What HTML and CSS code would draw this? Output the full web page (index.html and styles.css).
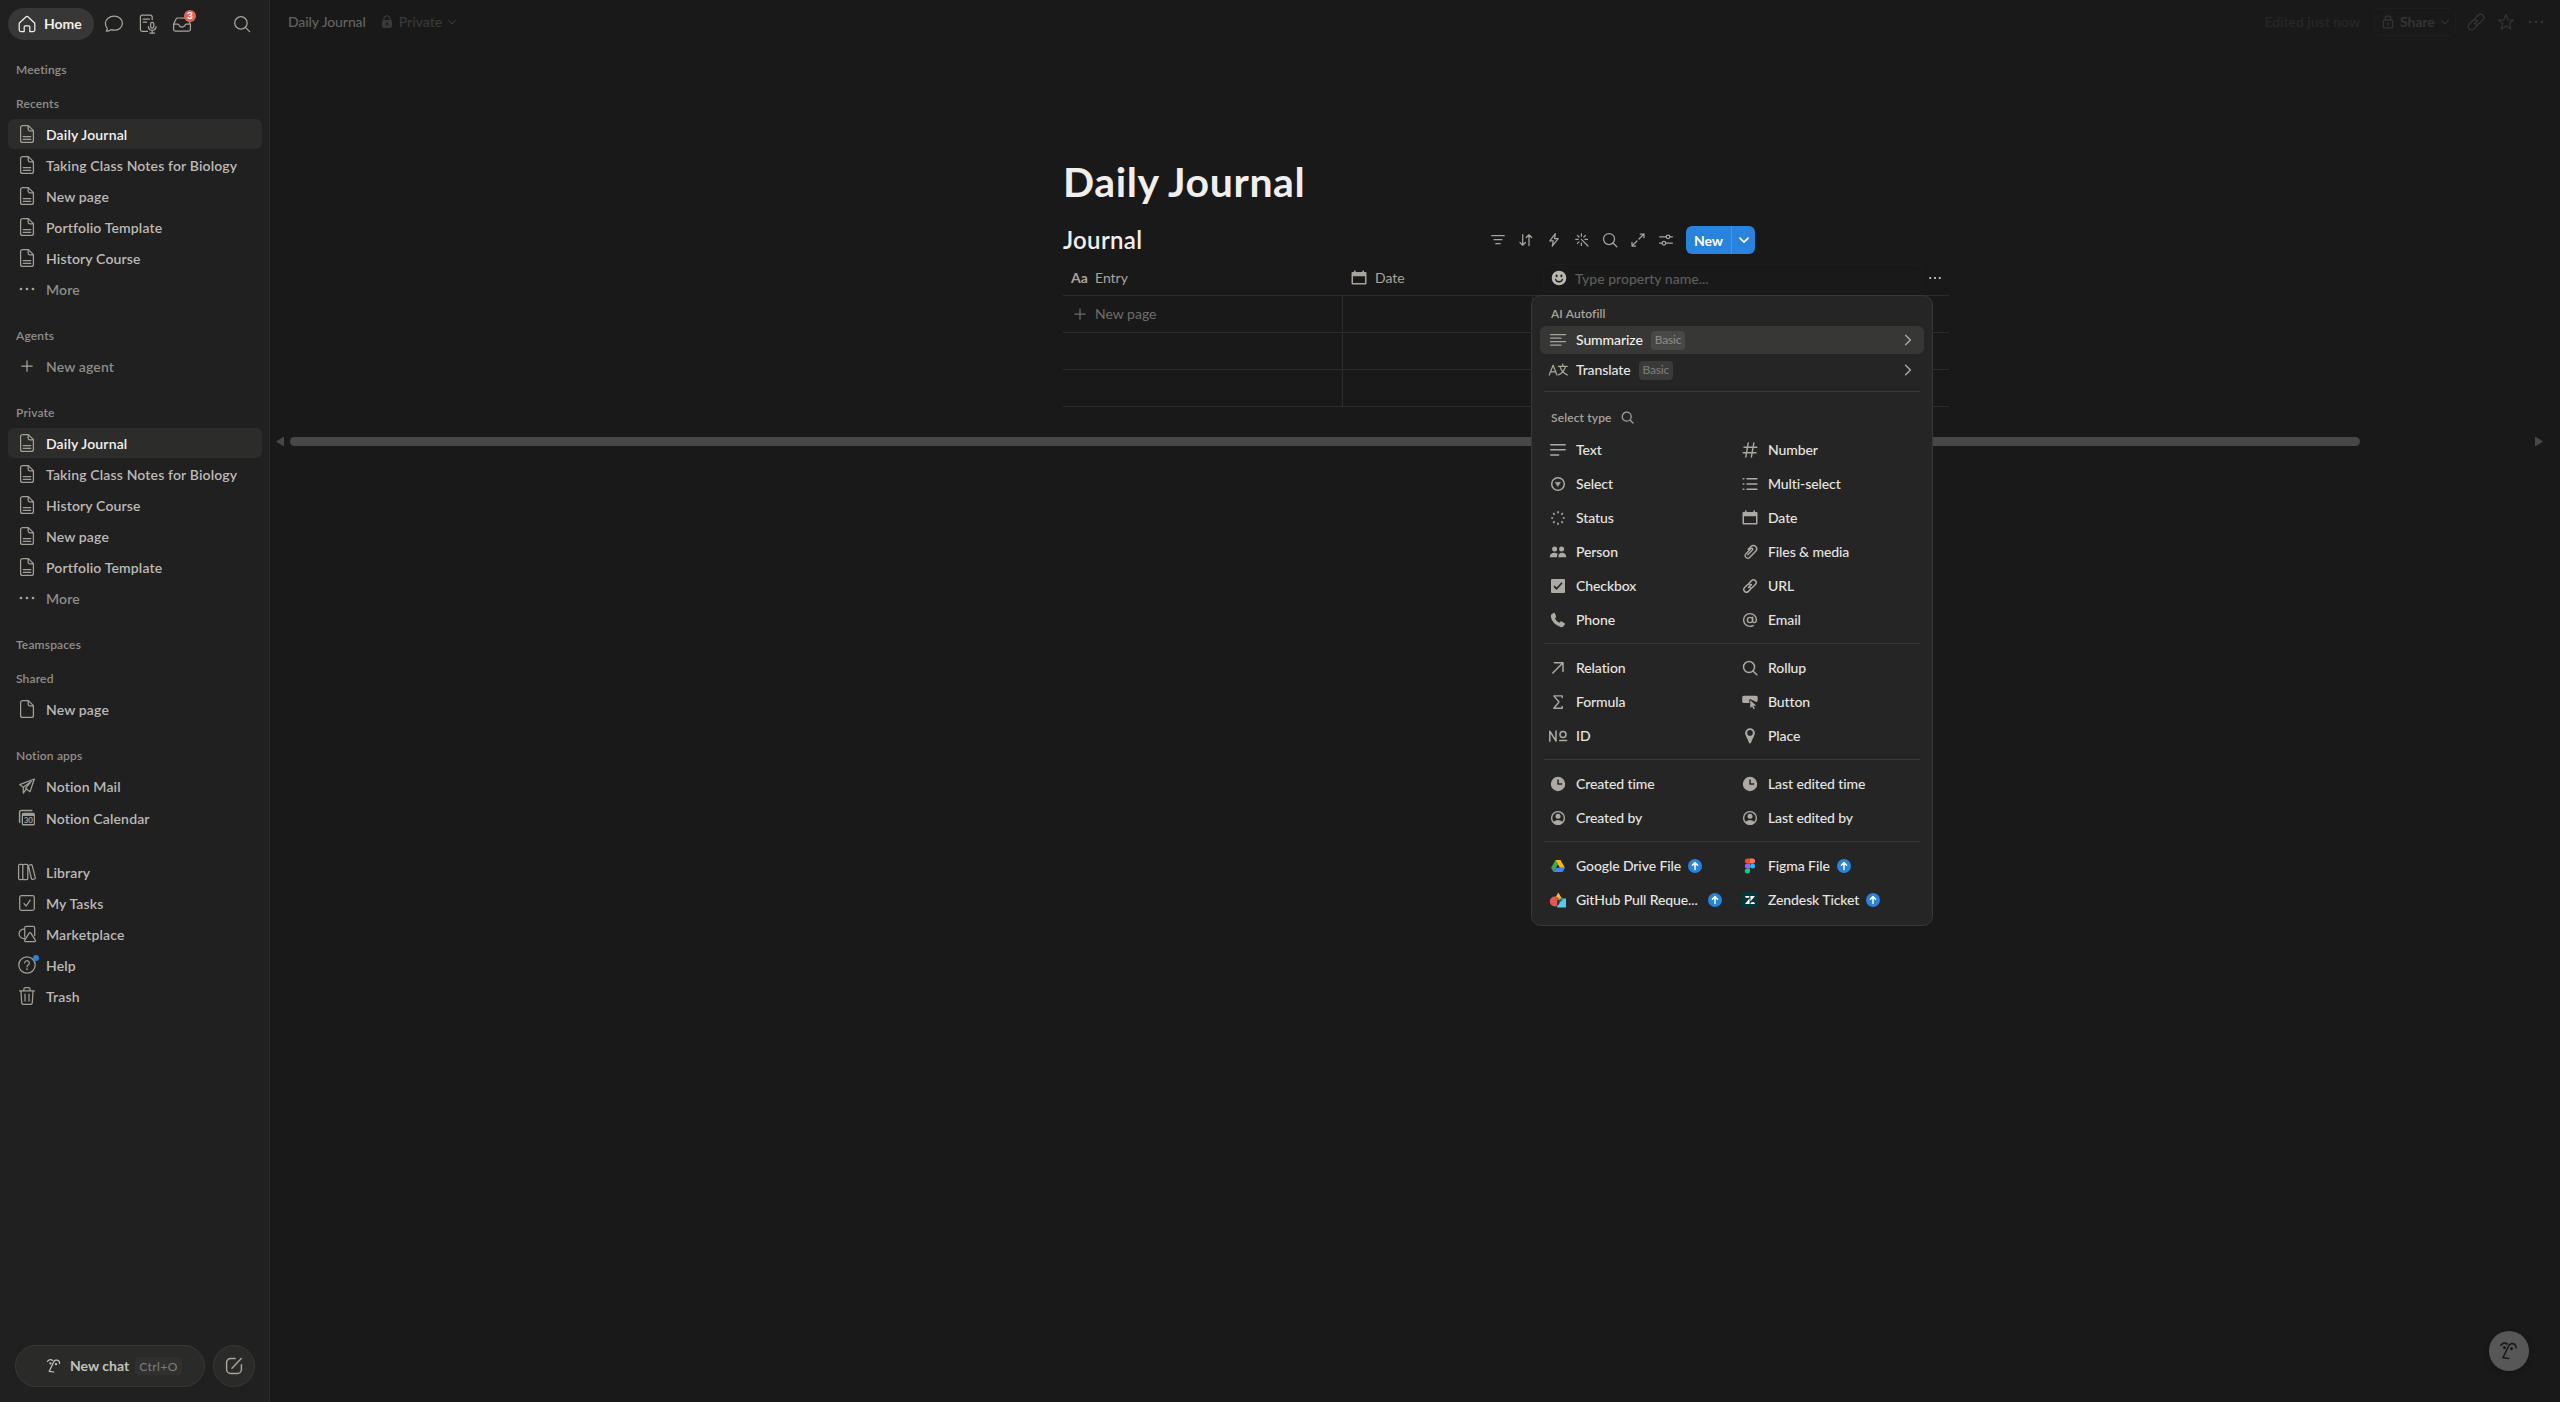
FILE: index.html
```html
<!DOCTYPE html>
<html lang="en">
<head>
<meta charset="utf-8">
<title>Daily Journal</title>
<link rel="stylesheet" href="styles.css">
</head>
<body>
<svg class="defs" aria-hidden="true">
  <symbol id="page" viewBox="0 0 20 20"><path d="M5.6 1.6h5.8l5 5v9.8a2 2 0 0 1-2 2H5.6a2 2 0 0 1-2-2V3.6a2 2 0 0 1 2-2zM11.2 1.9v3.3a1.6 1.6 0 0 0 1.6 1.6h3.4M6.2 12.5h7.6M6.2 15.3h7.6"/></symbol>
  <symbol id="blank" viewBox="0 0 20 20"><path d="M5.6 1.6h5.8l5 5v9.8a2 2 0 0 1-2 2H5.6a2 2 0 0 1-2-2V3.6a2 2 0 0 1 2-2zM11.2 1.9v3.3a1.6 1.6 0 0 0 1.6 1.6h3.4"/></symbol>
  <symbol id="dots" viewBox="0 0 20 20"><g fill="currentColor" stroke="none"><circle cx="4" cy="10" r="1.35"/><circle cx="10" cy="10" r="1.35"/><circle cx="16" cy="10" r="1.35"/></g></symbol>
  <symbol id="plus" viewBox="0 0 20 20"><path d="M10 4.8v10.4M4.8 10h10.4"/></symbol>
  <symbol id="search" viewBox="0 0 20 20"><circle cx="8.8" cy="8.8" r="6.9"/><path d="M13.8 13.8l4.7 4.7"/></symbol>
  <symbol id="chev" viewBox="0 0 16 16"><path d="M4 6.2l4 4 4-4"/></symbol>
  <symbol id="chevr" viewBox="0 0 16 16"><path d="M5.6 3.2L10.4 8l-4.8 4.8"/></symbol>
  <symbol id="link" viewBox="0 0 20 20"><path d="M8.3 11.7l3.4-3.400M8.800 6.500l3.200-3.200a3.300 3.300 0 0 1 4.700 4.700l-3.500 3.500a3 3 0 0 1-3 .8M11.200 13.500L8 16.700A3.300 3.300 0 0 1 3.300 12l3.500-3.500a3 3 0 0 1 3-.8"/></symbol>
  <symbol id="cal" viewBox="0 0 16 16"><path fill="currentColor" stroke="none" fill-rule="evenodd" d="M3 .6h1.6v1.5h6.8V.6H13v1.5h1.6q.9 0 .9.9v10.6q0 .9-.9.9H1.4q-.9 0-.9-.9V3q0-.9.9-.9H3zM2 6.2v6.8h12V6.2z"/></symbol>
  <symbol id="clock" viewBox="0 0 16 16"><path fill="currentColor" stroke="none" fill-rule="evenodd" d="M8 .8a7.2 7.2 0 1 0 0 14.4A7.2 7.2 0 0 0 8 .8zM7.3 3.6h1.5v3.7h3.4v1.5H7.3z"/></symbol>
  <symbol id="user" viewBox="0 0 16 16"><circle cx="8" cy="8" r="6.4" stroke-width="1.4"/><g fill="currentColor" stroke="none"><circle cx="8" cy="6.2" r="2.5"/><path d="M3 12.4Q4.6 9.9 8 9.9t5 2.5Q11 15 8 15t-5-2.6z"/></g></symbol>
  <symbol id="face" viewBox="0 0 16 16"><path d="M1.5 3.4Q3.6.6 6.6 2.4M13.6 5.6Q13.6 1.6 9.6 2.2 8.4 2.5 7.4 4.6L3.2 13.4l4.6.6"/><g fill="currentColor" stroke="none"><circle cx="4.4" cy="5.4" r="1.15"/><circle cx="10" cy="6.2" r="1.15"/></g></symbol>
  <symbol id="up" viewBox="0 0 14 14"><circle cx="7" cy="7" r="7" fill="#2783de" stroke="none"/><path d="M7 10.6V3.8M4.4 6.2L7 3.6l2.6 2.6" stroke="#fff" stroke-width="1.5"/></symbol>
</svg>

<div class="app">
  <aside class="sidebar">
    <div class="tabs">
      <div class="home"><svg class="i20"><path d="M2.2 9.2L8.8 3a1.8 1.8 0 0 1 2.4 0l6.6 6.2M2.2 9v6.8a1.8 1.8 0 0 0 1.8 1.8h3.2v-4.6a1.2 1.2 0 0 1 1.2-1.2h3.2a1.2 1.2 0 0 1 1.2 1.2v4.6H16a1.8 1.8 0 0 0 1.8-1.8V9"/></svg>Home</div>
      <svg class="i20"><path d="M10.2 2.2c4.7 0 8.2 3.1 8.2 7s-3.500 7-8.200 7c-1.100 0-2.200-.2-3.100-.5-1.200.9-2.700 1.500-4.900 1.500.9-.9 1.200-1.700 1-2.900C2.100 13 1.400 11.200 1.400 9.200c0-3.900 4.100-7 8.800-7z"/></svg>
      <svg class="i20"><path d="M9.500 17.400H4.200a1.800 1.800 0 0 1-1.800-1.800V3A1.800 1.800 0 0 1 4.200 1.200h8.200A1.800 1.800 0 0 1 14.200 3v2.600M5.200 5.200h6.200M5.200 8.200h3.400M12.600 10a1.600 1.600 0 0 1 3.200 0v2.600a1.600 1.600 0 0 1-3.200 0zM10.400 12.600c0 2.400 1.600 3.700 3.800 3.700s3.800-1.300 3.800-3.700M14.200 16.300v2.600M11.800 19h4.800"/></svg>
      <div class="inbox"><svg class="i20"><path d="M1.600 10.200L4.100 5a1.800 1.800 0 0 1 1.600-1h8.600a1.800 1.800 0 0 1 1.600 1l2.500 5.200v5a1.800 1.800 0 0 1-1.800 1.800H3.400a1.800 1.800 0 0 1-1.800-1.800zM1.600 10h4.200c.8 0 1 .5 1.300 1.200.5 1.200 1.500 1.800 2.900 1.800s2.400-.6 2.900-1.800c.3-.7.5-1.200 1.300-1.200h4.200"/></svg><b class="badge">3</b></div>
      <svg class="i20 find"><use href="#search"/></svg>
    </div>

    <section><h4>Meetings</h4></section>
    <section class="near"><h4>Recents</h4>
      <a class="row on"><svg class="i20"><use href="#page"/></svg>Daily Journal</a>
      <a class="row"><svg class="i20"><use href="#page"/></svg>Taking Class Notes for Biology</a>
      <a class="row"><svg class="i20"><use href="#page"/></svg>New page</a>
      <a class="row"><svg class="i20"><use href="#page"/></svg>Portfolio Template</a>
      <a class="row"><svg class="i20"><use href="#page"/></svg>History Course</a>
      <a class="row dim"><svg class="i20"><use href="#dots"/></svg>More</a>
    </section>
    <section><h4>Agents</h4>
      <a class="row dim"><svg class="i20"><use href="#plus"/></svg>New agent</a>
    </section>
    <section><h4>Private</h4>
      <a class="row on"><svg class="i20"><use href="#page"/></svg>Daily Journal</a>
      <a class="row"><svg class="i20"><use href="#page"/></svg>Taking Class Notes for Biology</a>
      <a class="row"><svg class="i20"><use href="#page"/></svg>History Course</a>
      <a class="row"><svg class="i20"><use href="#page"/></svg>New page</a>
      <a class="row"><svg class="i20"><use href="#page"/></svg>Portfolio Template</a>
      <a class="row dim"><svg class="i20"><use href="#dots"/></svg>More</a>
    </section>
    <section><h4>Teamspaces</h4></section>
    <section class="near"><h4>Shared</h4>
      <a class="row"><svg class="i20"><use href="#blank"/></svg>New page</a>
    </section>
    <section class="apps"><h4>Notion apps</h4>
      <a class="row"><svg class="i20"><path d="M17.300 3L2.700 8.600l3.600 2.600 7.900-5.600-5.700 6.700 4.500 3.400L17.300 3zM6.300 11.200v5.800l2.600-3.400"/></svg>Notion Mail</a>
      <a class="row"><svg class="i20"><path d="M2.600 14.200V4.200a1.800 1.800 0 0 1 1.800-1.700h10.400" stroke-width="1.500"/><path fill="currentColor" stroke="none" fill-rule="evenodd" d="M6.400 4.800h9.800a1.700 1.700 0 0 1 1.700 1.700v9.400a1.700 1.700 0 0 1-1.700 1.700H6.400a1.700 1.700 0 0 1-1.700-1.700V6.500a1.700 1.700 0 0 1 1.700-1.700zM6 8v8h10.700V8z"/><text class="num" x="6.700" y="14.900">30</text></svg>Notion Calendar</a>
    </section>
    <section class="tools">
      <a class="row"><svg class="i20"><path d="M1.600 3.600a1.200 1.200 0 0 1 1.200-1.200h1.800a1.200 1.200 0 0 1 1.200 1.200v12.800a1.200 1.200 0 0 1-1.200 1.200H2.800a1.200 1.200 0 0 1-1.200-1.200zM5.800 3.600A1.200 1.200 0 0 1 7 2.400h2.600a1.200 1.200 0 0 1 1.200 1.200v12.800a1.200 1.200 0 0 1-1.200 1.200H7a1.200 1.200 0 0 1-1.200-1.200zM11.600 4.400a1.200 1.200 0 0 1 .9-1.400l1.300-.3a1.200 1.200 0 0 1 1.400.9l3.100 12a1.200 1.200 0 0 1-.9 1.400l-1.600.4a1.200 1.200 0 0 1-1.400-.9z"/></svg>Library</a>
      <a class="row"><svg class="i20"><rect x="2.700" y="2.700" width="14.600" height="14.600" rx="1.800"/><path d="M7 10.600l2.200 2.400 4-5.800"/></svg>My Tasks</a>
      <a class="row"><svg class="i20"><path d="M7.900 12.800a1.700 1.700 0 0 1-.2-.8V4a1.600 1.600 0 0 1 1.600-1.600h6.800A1.600 1.600 0 0 1 17.700 4v7.600M7.600 5.200a4.700 4.700 0 1 0 .2 9.200M12.200 9.100a1 1 0 0 1 1.700 0l4.400 7a1 1 0 0 1-.9 1.600H8.700a1 1 0 0 1-.9-1.600z"/></svg>Marketplace</a>
      <a class="row help"><svg class="i20"><circle cx="10" cy="10" r="8.200"/><path d="M7.700 8a2.300 2.300 0 1 1 3.500 2c-.8.500-1.200.9-1.200 1.900"/><circle cx="10" cy="14.100" r=".9" fill="currentColor" stroke="none"/></svg><i class="ping"></i>Help</a>
      <a class="row"><svg class="i20"><path d="M2.600 4.900h14.800M6.900 4.700V3.300a1.600 1.600 0 0 1 1.600-1.600h3a1.600 1.600 0 0 1 1.600 1.600v1.400M4 5l.7 11.600a1.800 1.800 0 0 0 1.800 1.700h7a1.800 1.800 0 0 0 1.800-1.700L16 5M8 8.200v6.900M12 8.200v6.900"/></svg>Trash</a>
    </section>

    <div class="chatbar">
      <div class="chat"><svg class="i16"><use href="#face"/></svg><span>New chat</span><kbd>Ctrl+O</kbd></div>
      <div class="compose"><svg class="i20"><path d="M11.200 2.600H6.600a4 4 0 0 0-4 4v6.800a4 4 0 0 0 4 4h6.800a4 4 0 0 0 4-4V8.800M8 12.200l9.200-9.600"/></svg></div>
    </div>
  </aside>

  <main>
    <header class="top">
      <span class="crumb">Daily Journal</span>
      <span class="priv"><svg class="i16"><path fill="currentColor" stroke="none" fill-rule="evenodd" d="M4.300 6V4.900a3.700 3.700 0 0 1 7.400 0V6q1.300 0 1.300 1.400v4.800q0 1.800-1.800 1.800H4.800Q3 14 3 12.200V7.400Q3 6 4.300 6zM5.500 6h5V4.900a2.500 2.500 0 0 0-5 0zM8 8.400a1.200 1.200 0 0 0-.5 2.200v1.200h1v-1.200A1.200 1.200 0 0 0 8 8.400z"/></svg>Private<svg class="i14"><use href="#chev"/></svg></span>
      <span class="edited">Edited just now</span>
      <span class="share"><svg class="i16"><rect x="3.300" y="6.200" width="9.400" height="7.600" rx="1.400"/><path d="M5.200 6V4.600a2.800 2.800 0 0 1 5.600 0V6M8 8.900v2.300"/></svg><span>Share</span><svg class="i14"><use href="#chev"/></svg></span>
      <span class="acts"><svg class="i20"><use href="#link"/></svg><svg class="i20"><path d="M10 2.600l2.100 5.200 5.500.3-4.300 3.500 1.400 5.400-4.700-3-4.700 3 1.400-5.400L2.400 8.100l5.500-.3z"/></svg><svg class="i20"><use href="#dots"/></svg></span>
    </header>

    <div class="doc">
      <h1>Daily Journal</h1>
      <div class="viewbar">
        <h2>Journal</h2>
        <div class="icons">
          <svg class="i16"><path d="M1.800 3.700h12.400M4 7.700h8M5.800 11.700h4.400"/></svg>
          <svg class="i16"><path d="M4.700 2.500v10.600M2 10.500l2.700 2.700 2.700-2.700M11 13.500V2.900M8.300 5.500L11 2.800l2.700 2.700"/></svg>
          <svg class="i16"><path d="M9.300 1.700L3.800 8.900h3.500l-1 5.200 5.900-7.400H8.600z"/></svg>
          <svg class="i16"><path d="M7.400 7.400l6.600 6.600M7.400 1.800v2.400M7.400 11v2.400M1.800 7.400h2.400M11 7.400h2.400M3.400 3.400L5 5M11.400 3.400L9.900 5M3.400 11.400L5 9.900"/></svg>
          <svg class="i16 firm"><use href="#search"/></svg>
          <svg class="i16"><path d="M9 7l5-5M10.300 2H14v3.700M7 9l-5 5M2 10.300V14h3.700"/></svg>
          <svg class="i16"><path d="M1.600 4.800h6.600M12 4.800h2.400M1.600 11.200H4M7.800 11.200h6.600"/><circle cx="10.100" cy="4.800" r="1.800"/><circle cx="5.900" cy="11.200" r="1.800"/></svg>
        </div>
        <div class="new"><span>New</span><span class="drop"><svg class="i16"><use href="#chev"/></svg></span></div>
      </div>

      <div class="table">
        <div class="head">
          <span class="c1"><b class="aa">Aa</b>Entry</span>
          <span class="c2"><svg class="i16"><use href="#cal"/></svg>Date</span>
          <span class="c3"><span class="field"><svg class="i16"><path fill="currentColor" stroke="none" fill-rule="evenodd" d="M8 .7a7.300 7.300 0 1 0 0 14.600A7.300 7.300 0 0 0 8 .7zM5.600 4.600a1 1.300 0 1 1 0 2.600 1 1.300 0 0 1 0-2.600zM10.400 4.600a1 1.300 0 1 1 0 2.600 1 1.300 0 0 1 0-2.600zM3.800 8.800h1.100Q5.600 11 8 11t3.100-2.200h1.100Q11.600 12.400 8 12.400T3.800 8.800z"/></svg>Type property name...</span><svg class="i16 more"><use href="#dots"/></svg></span>
        </div>
        <div class="line"><span class="c1"><svg class="i20"><use href="#plus"/></svg>New page</span><span class="c2"></span></div>
        <div class="line"><span class="c1"></span><span class="c2"></span></div>
        <div class="line"><span class="c1"></span><span class="c2"></span></div>

        <div class="menu">
          <h5>AI Autofill</h5>
          <div class="ai sel"><svg class="i16"><path d="M.5 2.700h15M.5 6.200h10.500M.5 9.700h15M.5 13.200h10.500"/></svg>Summarize<em>Basic</em><svg class="i16 go"><use href="#chevr"/></svg></div>
          <div class="ai"><svg class="i20 tr"><path d="M1.200 15L5.100 5.200 9 15M2.600 11.800h5M10.300 6.400h8.900M14.700 4.200v2.200M17.400 6.600q-1.500 5.800-6.800 8.300M12 6.600q1.800 5.800 7.300 8.300"/></svg>Translate<em>Basic</em><svg class="i16 go"><use href="#chevr"/></svg></div>
          <hr>
          <h5 class="pick">Select type<svg class="i12"><use href="#search"/></svg></h5>
          <div class="types">
            <div><svg class="i16"><path d="M.8 2.700h14.400M.8 7.800h14.400M.8 12.900h7.800" stroke-width="1.500"/></svg>Text</div>
            <div><svg class="i16"><path d="M6.200 1L3.800 15M11.800 1L9.400 15M2 5.300h12.800M1.200 10.700H14" stroke-width="1.400"/></svg>Number</div>
            <div><svg class="i16"><circle cx="8" cy="8" r="6.300" stroke-width="1.500"/><path fill="currentColor" d="M5.700 6.400h4.600L8 10z" stroke-width=".8"/></svg>Select</div>
            <div><svg class="i16"><path d="M5 2.800h9.900M5 8h9.900M5 13.200h9.900M1.200 2.800h.7M1.200 8h.7M1.200 13.200h.7" stroke-width="1.500"/></svg>Multi-select</div>
            <div><svg class="i16"><path d="M8 1.200v2M8 12.800v2M1.200 8h2M12.800 8h2M3.200 3.200l1.400 1.400M11.400 11.400l1.400 1.400M3.200 12.800l1.400-1.400M11.400 4.600l1.400-1.400" stroke-width="1.700" stroke-linecap="butt"/></svg>Status</div>
            <div><svg class="i16"><use href="#cal"/></svg>Date</div>
            <div><svg class="i16"><g fill="currentColor" stroke="none"><circle cx="4.600" cy="5" r="2.500"/><circle cx="11.600" cy="5" r="2.500"/><path d="M-.2 13.300q0-4.600 4.600-4.600 2.400 0 3.300 1.200-.9 1.200-.8 3.400zM8.300 13.300q0-4.600 3.500-4.600 4.400 0 4.400 4.600z"/></g></svg>Person</div>
            <div><svg class="i16"><path d="M5.800 10.800l4.600-4.700a1 1 0 0 0-1.500-1.500L4 9.700a2.600 2.600 0 0 0-.2 3.700 2.600 2.600 0 0 0 3.800 0l6.100-6.200a3.300 3.300 0 0 0-4.700-4.700L6.200 5.300" stroke-width="1.400"/></svg>Files &amp; media</div>
            <div><svg class="i16"><path fill="currentColor" stroke="none" fill-rule="evenodd" d="M2 1h12q1 0 1 1v12q0 1-1 1H2q-1 0-1-1V2q0-1 1-1zM4.600 7.500l-1.200 1.200 3.200 3.200 6-6.600-1.200-1.100-4.800 5.300z"/></svg>Checkbox</div>
            <div><svg class="i16 bold"><use href="#link"/></svg>URL</div>
            <div><svg class="i16"><path fill="currentColor" stroke="none" d="M3.800.9L1.700 2.100Q.6 3 .9 5q.7 3.800 3.300 6.300t6.300 3.800q2 .3 3-.9l1.500-1.900q.3-.6-.3-1.100l-3-1.800q-.6-.3-1.100.1l-1.500 1.200Q6.500 9.300 5 6.700l1-1.600q.3-.6 0-1.100L4.900 1.300Q4.500.6 3.800.9z"/></svg>Phone</div>
            <div><svg class="i16"><circle cx="8" cy="8" r="2.600" stroke-width="1.400"/><path d="M10.600 5.200v3.600q0 1.800 1.600 1.800 2.200 0 2.200-2.900A6.400 6.400 0 1 0 8 14.400q1.700 0 3.200-.8" stroke-width="1.400"/></svg>Email</div>
          </div>
          <hr>
          <div class="types">
            <div><svg class="i16"><path d="M2.800 13L13 2.800M4.400 2.800H13v8.600" stroke-width="1.500"/></svg>Relation</div>
            <div><svg class="i16 bold"><use href="#search"/></svg>Rollup</div>
            <div><svg class="i16"><path d="M12.200 3.600V1.900H3.800L9 8l-5.200 6.200h8.400v-1.700" stroke-width="1.400"/></svg>Formula</div>
            <div><svg class="i16"><path fill="currentColor" stroke="none" d="M1.800 1.800h12.400q1.500 0 1.500 1.500v3q0 1.700-1.500 1.700L8.600 5.200Q7.200 4.900 7.200 6.300L7.400 9H1.800Q.2 9 .2 7.400V3.300q0-1.500 1.600-1.500z"/><path fill="currentColor" stroke="none" d="M8.200 6.200l6 5.400-2.700.2 1.400 2.800-1.300.7-1.400-2.900-1.900 1.700z"/></svg>Button</div>
            <div><svg class="i20 tr"><path d="M1.800 15.300V5.200l6.200 9.800V4.900" stroke-width="1.500"/><circle cx="15" cy="8.400" r="3" stroke-width="1.500"/><path d="M11.600 14.500h7" stroke-width="1.500"/></svg>ID</div>
            <div><svg class="i16"><path fill="currentColor" stroke="none" fill-rule="evenodd" d="M8 .2a4.900 4.900 0 0 1 4.900 4.900c0 2.600-2.500 5.600-3.800 9.300q-.3 1-1.100 1t-1.100-1C5.600 10.700 3.100 7.700 3.100 5.100A4.900 4.900 0 0 1 8 .2zM8 2.100a2.800 2.800 0 1 0 0 5.600 2.800 2.800 0 0 0 0-5.600z"/></svg>Place</div>
          </div>
          <hr>
          <div class="types">
            <div><svg class="i16"><use href="#clock"/></svg>Created time</div>
            <div><svg class="i16"><use href="#clock"/></svg>Last edited time</div>
            <div><svg class="i16"><use href="#user"/></svg>Created by</div>
            <div><svg class="i16"><use href="#user"/></svg>Last edited by</div>
          </div>
          <hr>
          <div class="types">
            <div><svg class="i16 logo"><path fill="#34a853" d="M5.500 2L8 6.400 3.600 14 1.100 9.700z"/><path fill="#fbbc04" d="M5.500 2h5l4.400 7.700H9.900z"/><path fill="#4285f4" d="M6.100 9.700h8.800L12.400 14H3.600z"/></svg>Google Drive File<svg class="up"><use href="#up"/></svg></div>
            <div><svg class="i16 logo"><path fill="#f24e1e" d="M8 .4v5H5.400a2.500 2.500 0 0 1 0-5z"/><path fill="#ff7262" d="M8 .4h2.600a2.500 2.500 0 0 1 0 5H8z"/><path fill="#a259ff" d="M8 5.400v5H5.400a2.500 2.500 0 0 1 0-5z"/><circle cx="10.600" cy="7.900" r="2.500" fill="#1abcfe"/><path fill="#0acf83" d="M8 10.400v2.500a2.600 2.500 0 1 1-2.600-2.500z"/></svg>Figma File<svg class="up"><use href="#up"/></svg></div>
            <div><svg class="i16 logo"><path fill="#f9bc3c" d="M8.300.4L12.800 8H4z"/><path fill="#55c8f2" d="M7.200 6.500H16V15.500H7.200z"/><circle cx="4.800" cy="9.500" r="5" fill="#ea5455"/><path fill="#e8541e" d="M5.900 4.600Q9 5.500 9.600 8H4z"/><path fill="#12893f" d="M9.600 6.500h2.300l.9 1.500Q11.500 9.800 9.700 10.200z"/><path fill="#3b2d3c" d="M7.200 8h2.400q.9 3.800-2.400 5.900z"/></svg>GitHub Pull Reque...<svg class="up far"><use href="#up"/></svg></div>
            <div><svg class="i16 logo"><path fill="#03363d" d="M0 0h16v16H0z"/><path fill="#fff" d="M3 3.900h4.600q0 2-2.300 2T3 3.900zM8.400 3.900H13L8.400 9.500zM7.600 6.300v5.800H3zM8.400 12.100q0-2 2.300-2t2.300 2z"/></svg>Zendesk Ticket<svg class="up"><use href="#up"/></svg></div>
          </div>
        </div>
      </div>
    </div>

    <div class="hscroll"><i class="left"></i><div class="thumb"></div><i class="right"></i></div>
    <div class="ai-button"><svg class="i20"><use href="#face"/></svg></div>
  </main>
</div>
</body>
</html>
```
FILE: styles.css
```css
* { box-sizing: border-box; }
html, body { height: 100%; }
body {
  margin: 0;
  overflow: hidden;
  background: #191919;
  color: #bcbab6;
  font: 600 14px/20px Lato, "Liberation Sans", sans-serif;
  letter-spacing: .15px;
}
h1, h2, h4, h5 { margin: 0; }
.defs { position: absolute; width: 0; height: 0; }
svg {
  flex: none;
  fill: none;
  stroke: currentColor;
  stroke-width: 1.25;
  stroke-linecap: round;
  stroke-linejoin: round;
  overflow: visible;
}
.i20 { width: 20px; height: 20px; }
.i16 { width: 16px; height: 16px; }
.i14 { width: 14px; height: 14px; }
.i12 { width: 13px; height: 13px; stroke-width: 1.9; }
.firm { stroke-width: 1.6; }
.app { display: flex; height: 100%; }

/* Sidebar */
.sidebar {
  display: flex;
  flex-direction: column;
  width: 270px;
  flex: none;
  padding: 8px 7px 0 8px;
  background: #202020;
  border-right: 1px solid #2b2b2b;
}
.tabs {
  display: flex;
  align-items: center;
  height: 32px;
  margin-bottom: -1px;
  color: #a8a49c;
}
.home {
  display: flex;
  align-items: center;
  gap: 7px;
  width: 86px;
  height: 32px;
  padding-left: 9px;
  margin-right: 10px;
  border-radius: 16px;
  background: #373735;
  color: #f0efed;
  font-weight: 700;
  letter-spacing: 0;
}
.tabs > svg { margin-right: 14px; }
.tabs > .find { margin: 0 11px 0 auto; width: 18px; height: 18px; stroke-width: 1.4; }
.inbox { position: relative; height: 20px; }
.badge {
  position: absolute;
  left: 12px;
  top: -4px;
  width: 12px;
  height: 12px;
  border-radius: 50%;
  background: #e56458;
  color: #fff;
  font: 700 9px/12px Inter, sans-serif;
  text-align: center;
  letter-spacing: 0;
}
section { margin-top: 16px; }
section.near { margin-top: 4px; }
h4 {
  height: 30px;
  padding: 0 8px;
  color: #918f8b;
  font-size: 12px;
  line-height: 29px;
  font-weight: 600;
  letter-spacing: .17px;
}
.row {
  position: relative;
  display: flex;
  align-items: center;
  gap: 9px;
  height: 30px;
  margin-bottom: 1px;
  padding: 2px 0 0 9px;
  border-radius: 6px;
}
.row svg { color: #a29f98; margin-top: -2px; }
.row.on { background: #2c2c2b; color: #f4f3f1; }
.row.dim { color: #8f8d89; }
.row.dim svg { color: #a8a49c; }
.apps .row { margin-bottom: 2px; }
.tools { margin-top: 22px; }
.num { font: 700 8px Lato, sans-serif; fill: currentColor; stroke: none; letter-spacing: 0; }
.ping {
  position: absolute;
  left: 25px;
  top: 5px;
  width: 6px;
  height: 6px;
  border-radius: 50%;
  background: #2783de;
}
.chatbar { display: flex; gap: 8px; margin: auto 0 15px 7px; }
.chat, .compose {
  display: flex;
  align-items: center;
  height: 42px;
  border: 1px solid #383836;
  border-radius: 21px;
  background: #2a2a28;
  color: #c4c1bc;
}
.chat { width: 190px; padding-left: 30px; font-weight: 700; letter-spacing: 0; }
.chat svg { margin-right: 8px; }
kbd {
  height: 18px;
  margin-left: 6px;
  padding: 1px 4px 0;
  border-radius: 4px;
  background: #30302e;
  color: #7d7a75;
  font: 500 12px/18px Lato, sans-serif;
  letter-spacing: .45px;
}
.compose { width: 42px; justify-content: center; }
.compose svg { stroke-width: 1.5; color: #a8a49c; }

/* Page header */
main { flex: 1; min-width: 0; display: flex; flex-direction: column; }
.top {
  display: flex;
  align-items: center;
  height: 44px;
  padding: 0 14px 0 18px;
  font-weight: 500;
  letter-spacing: -.1px;
}
.crumb { color: #636261; margin-right: 13px; }
.priv { display: flex; align-items: center; color: #393938; letter-spacing: 0; }
.priv svg:first-child { margin-right: 4px; }
.priv svg:last-child { margin-left: 3px; }
.edited { margin-left: auto; margin-right: 14px; color: #282828; letter-spacing: 0; }
.share {
  display: flex;
  align-items: center;
  width: 82px;
  height: 28px;
  padding-left: 5px;
  border: 1px solid #1e1e1e;
  border-radius: 6px;
  color: #343434;
  font-weight: 700;
}
.share span { margin: 0 3px 0 4px; width: 35px; }
.acts { display: flex; gap: 10px; margin-left: 10px; color: #343434; }

/* Document */
.doc { width: 886px; margin: 112px 0 0 793px; }
h1 {
  height: 60px;
  color: #f0efed;
  font-size: 41px;
  line-height: 51px;
  font-weight: 700;
  letter-spacing: .6px;
}
.viewbar { display: flex; align-items: center; height: 48px; }
h2 { color: #f0efed; font-size: 24px; line-height: 30px; font-weight: 600; letter-spacing: .3px; width: 427px; }
.icons { display: flex; gap: 12px; color: #a8a49c; }
.new {
  display: flex;
  align-items: center;
  height: 28px;
  width: 69px;
  margin-left: 12px;
  border-radius: 6px;
  background: #2783de;
  color: #fff;
  font-weight: 700;
  letter-spacing: 0;
}
.new > span:first-child { width: 45px; padding-top: 2px; text-align: center; }
.drop { display: flex; align-items: center; justify-content: center; flex: 1; height: 28px; border-left: 1px solid #4795e3; }
.drop svg { stroke-width: 1.7; }

.table { position: relative; font-weight: 400; letter-spacing: 0; }
.head, .line { display: flex; border-bottom: 1px solid #2c2c2b; }
.head { height: 32px; padding-bottom: 3px; color: #a8a49c; }
.head > span { display: flex; align-items: center; }
.c1 { width: 280px; padding-left: 8px; }
.c2 { width: 190px; padding-left: 8px; }
.head svg { margin-right: 8px; }
.aa { width: 18px; margin-right: 6px; font-size: 14px; font-weight: 700; }
.c3 { flex: 1; }
.field {
  display: flex;
  align-items: center;
  width: 379px;
  height: 28px;
  margin-left: 10px;
  padding: 2px 0 0 7px;
  border: 1px solid #1d1d1d;
  border-radius: 6px;
  color: #5e5d5b;
  font-weight: 500;
}
.field svg { margin-top: -2px; color: #bab6af; }
.head .more { margin: 0 0 0 5px; color: #d4d2ce; }
.line { height: 37px; color: #6f6d6a; }
.line > span { display: flex; align-items: center; border-right: 1px solid #2c2c2b; }
.line .c1 { padding-left: 7px; }
.line svg { margin-right: 5px; }

/* Property menu */
.menu {
  position: absolute;
  left: 468px;
  top: 31px;
  width: 402px;
  height: 631px;
  padding: 5px 8px;
  border: 1px solid #383836;
  border-radius: 10px;
  background: #252525;
  color: #e6e5e3;
  font-weight: 500;
  letter-spacing: -.1px;
}
h5 {
  height: 25px;
  padding: 1px 11px 0;
  color: #a8a49c;
  font-size: 12px;
  line-height: 24px;
  font-weight: 600;
  letter-spacing: .13px;
}
.ai { display: flex; align-items: center; height: 28px; padding-left: 10px; border-radius: 6px; margin-bottom: 2px; }
.ai svg { color: #a8a49c; margin-right: 10px; }
.ai .tr, .types .tr { margin-left: -2px; margin-right: 8px; }
.ai.sel { background: #373735; color: #f0efed; }
.ai em {
  height: 19px;
  margin-left: 8px;
  padding: 0 4px;
  border-radius: 4px;
  background: #3a3a38;
  color: #7d7a75;
  font: 500 12px/18px Lato, sans-serif;
  letter-spacing: -.2px;
}
.ai.sel em { background: #484846; color: #8b8883; }
.ai .go { margin: 0 8px 0 auto; stroke-width: 1.5; }
hr { height: 1px; margin: 6px 4px 7px; border: 0; background: #383836; }
.ai + hr { margin: 7px 4px 13px; }
.pick { display: flex; align-items: center; gap: 9px; height: 26px; padding-top: 0; padding-bottom: 1px; margin-bottom: 2px; }
.types { display: grid; grid-template-columns: 192px 192px; grid-auto-rows: 34px; }
.types > div { display: flex; align-items: center; padding-left: 10px; }
.types svg { color: #ada9a3; margin-right: 10px; }
.types .up { width: 14px; height: 14px; margin: 0 0 0 7px; }
.types .far { margin-left: 10px; }
.types .logo { stroke: none; }
.bold { stroke-width: 1.85; }

/* Horizontal scrollbar */
.hscroll { display: flex; align-items: center; height: 9px; margin-top: 30px; padding: 0 17px 0 6px; }
.hscroll i { width: 8px; height: 9px; background: #474747; }
.hscroll .left { margin-right: 6px; clip-path: polygon(0 50%, 88% 0, 100% 0, 100% 100%, 88% 100%); }
.hscroll .right { margin-left: auto; clip-path: polygon(100% 50%, 12% 0, 0 0, 0 100%, 12% 100%); }
.thumb { width: 2070px; height: 9px; border-radius: 5px; background: #474747; }

.ai-button {
  display: flex;
  align-items: center;
  justify-content: center;
  width: 40px;
  height: 40px;
  margin: auto 31px 31px auto;
  border-radius: 50%;
  background: #575757;
  color: #191919;
  box-shadow: 0 2px 6px rgba(0, 0, 0, .2);
}
```
